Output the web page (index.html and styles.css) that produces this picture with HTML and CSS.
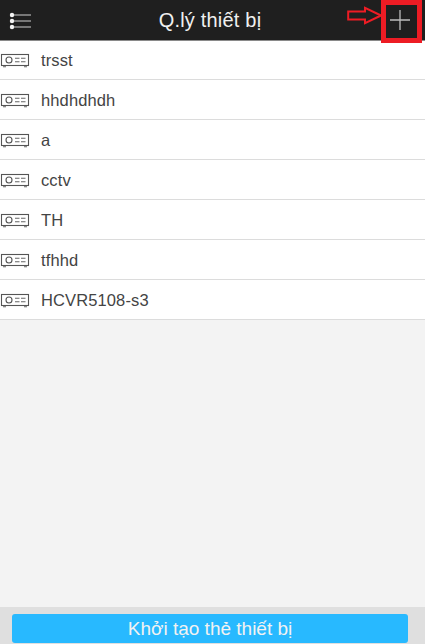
FILE: index.html
```html
<!DOCTYPE html>
<html lang="vi">
<head>
<meta charset="utf-8">
<title>Q.lý thiết bị</title>
<link rel="stylesheet" href="styles.css">
</head>
<body>
<svg class="defs" width="0" height="0">
  <symbol id="dev" viewBox="0 0 30 15">
    <rect x="1.5" y="1.5" width="27" height="11" fill="none" stroke="#555" stroke-width="1.1"/>
    <circle cx="9" cy="7" r="3" fill="none" stroke="#555" stroke-width="1.1"/>
    <path d="M15 5.2h4.5M21 5.2h4.5M15 8.8h4.5M21 8.8h4.5M3 13.7h3M24 13.7h3" fill="none" stroke="#666" stroke-width="1.1"/>
  </symbol>
</svg>
<div class="app">
  <header class="bar">
    <svg class="menu" width="24" height="18" viewBox="0 0 24 18">
      <circle cx="3" cy="3" r="2.2" fill="#f4f4f4"/><circle cx="3" cy="9" r="2.2" fill="#f4f4f4"/><circle cx="3" cy="15" r="2.2" fill="#f4f4f4"/>
      <path d="M5 3h17M5 9h17M5 15h17" stroke="#cfcfcf" stroke-width="1.1"/>
    </svg>
    <h1 class="title">Q.lý thiết bị</h1>
    <svg class="plus" width="22" height="22" viewBox="0 0 22 22"><path d="M11 1v20M1 11h20" stroke="#bdbdbd" stroke-width="1.3"/></svg>
    <div class="add-box"></div>
    <svg class="arrow" width="36" height="19" viewBox="0 0 36 19">
      <path d="M1.2 5.5H18V1.8L34 9.5 18 17.2v-3.7H1.2z" fill="none" stroke="#ed1c24" stroke-width="2"/>
    </svg>
  </header>
  <ul class="list">
    <li class="row"><svg class="dev"><use href="#dev"/></svg><span>trsst</span></li>
    <li class="row"><svg class="dev"><use href="#dev"/></svg><span>hhdhdhdh</span></li>
    <li class="row"><svg class="dev"><use href="#dev"/></svg><span>a</span></li>
    <li class="row"><svg class="dev"><use href="#dev"/></svg><span>cctv</span></li>
    <li class="row"><svg class="dev"><use href="#dev"/></svg><span>TH</span></li>
    <li class="row"><svg class="dev"><use href="#dev"/></svg><span>tfhhd</span></li>
    <li class="row"><svg class="dev"><use href="#dev"/></svg><span>HCVR5108-s3</span></li>
  </ul>
  <footer class="foot">
    <button class="init">Khởi tạo thẻ thiết bị</button>
  </footer>
</div>
</body>
</html>
```
FILE: styles.css
```css
* { box-sizing: border-box; }
html, body { margin: 0; padding: 0; }
body { font-family: "Liberation Sans", Arial, sans-serif; background: #f3f3f3; }
.defs { position: absolute; }
.app { width: 425px; height: 644px; display: flex; flex-direction: column; overflow: hidden; }
.bar { position: relative; flex: none; height: 41px; padding-right: 5px; background: #1f1f1f; border-bottom: 1px solid #8a8a8a; display: flex; align-items: center; justify-content: center; }
.menu { position: absolute; left: 9px; top: 11.5px; }
.title { margin: 0; font-size: 20px; letter-spacing: 0.2px; font-weight: 400; color: #f0f0f0; }
.plus { position: absolute; left: 389px; top: 9px; }
.add-box { position: absolute; left: 381px; top: 0; width: 41px; height: 43px; border: 5px solid #ed1c24; }
.arrow { position: absolute; left: 347px; top: 6px; }
.list { list-style: none; margin: 0; padding: 0; background: #fff; flex: none; }
.row { height: 40px; padding-top: 1px; display: flex; align-items: center; gap: 11px; border-bottom: 1px solid #dcdcdc; font-size: 16.5px; letter-spacing: 0.12px; color: #444; }
.row:first-child { height: 39px; padding-top: 0; }
.dev { width: 30px; height: 15px; flex: none; }
.foot { margin-top: auto; height: 37px; background: #dfdfdf; padding: 7px 12px 0; flex: none; }
.init { display: block; width: 396px; height: 29px; border: 0; border-radius: 3px; background: #28b9ff; color: #f2f2f2; font: 19px "Liberation Sans", Arial, sans-serif; padding: 0; }
```
